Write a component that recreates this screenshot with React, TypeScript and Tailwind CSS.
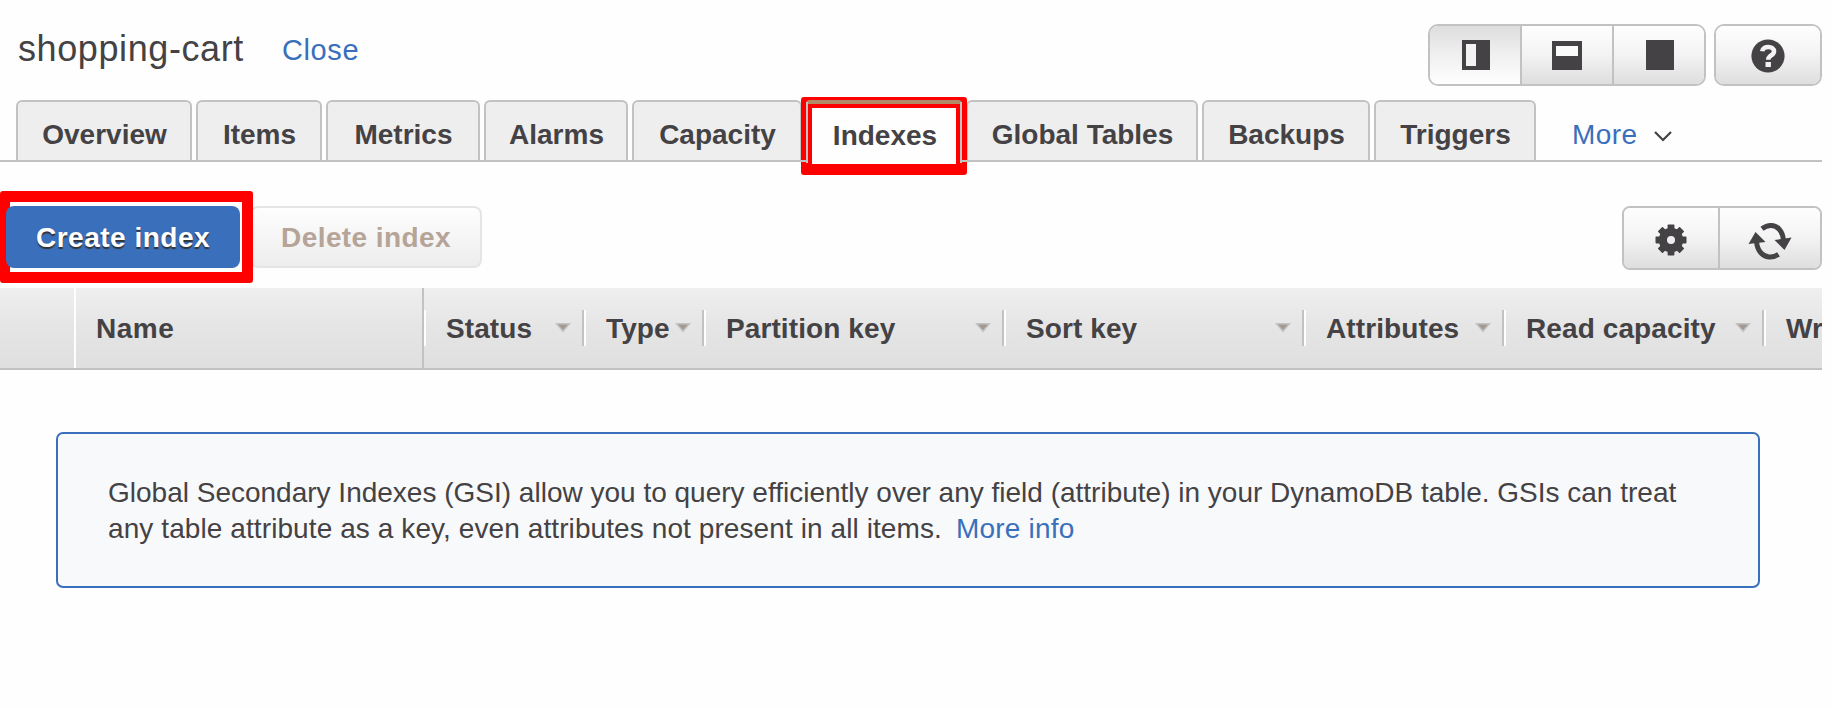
import type { ReactNode } from "react";

const TABS = [
  { label: "Overview", width: "w-[176px]" },
  { label: "Items", width: "w-[126px]" },
  { label: "Metrics", width: "w-[154px]" },
  { label: "Alarms", width: "w-[144px]" },
  { label: "Capacity", width: "w-[170px]" },
  { label: "Indexes", width: "w-[156px]" },
  { label: "Global Tables", width: "w-[232px]" },
  { label: "Backups", width: "w-[168px]" },
  { label: "Triggers", width: "w-[162px]" },
];

const COLUMNS = [
  { label: "Status", width: "w-[160px]" },
  { label: "Type", width: "w-[120px]" },
  { label: "Partition key", width: "w-[300px]" },
  { label: "Sort key", width: "w-[300px]" },
  { label: "Attributes", width: "w-[200px]" },
  { label: "Read capacity", width: "w-[260px]" },
];

function Tab({ label, width }: { label: string; width: string }) {
  if (label === "Indexes") {
    return (
      <div className={`${width} relative flex h-[62px] shrink-0 items-center justify-center bg-[#fefefe]`}>
        <div className="absolute -left-[5px] -top-[3px] h-[78px] w-[166px] rounded-[3px] border-[11px] border-[#ff0000]" />
        <div className="absolute inset-x-0 top-0 h-[4px] rounded-t-[4px] bg-[#b38a66]" />
        <div className="absolute left-0 top-[2px] h-[61px] w-[2px] bg-[#c1c3c3]" />
        <div className="absolute right-0 top-[2px] h-[61px] w-[2px] bg-[#c1c3c3]" />
        <div className="absolute -left-[5px] bottom-0 h-[2px] w-[6px] bg-[#c1c3c3]" />
        <div className="absolute -right-[5px] bottom-0 h-[2px] w-[6px] bg-[#c1c3c3]" />
        <span className="relative pl-[2px] pt-[10px]">{label}</span>
      </div>
    );
  }
  return (
    <div
      className={`${width} flex h-[60px] shrink-0 items-center justify-center rounded-t-[6px] border-2 border-b-0 border-[#c1c3c3] bg-[#eeeeee] pl-px pt-[7px]`}
    >
      {label}
    </div>
  );
}

function Button({ children, className }: { children: ReactNode; className: string }) {
  return (
    <button
      className={`${className} flex h-full shrink-0 items-center justify-center bg-linear-to-b from-[#fefefe] via-[#f3f3f3] to-[#dedede]`}
    >
      {children}
    </button>
  );
}

function GearIcon() {
  return (
    <svg width="32" height="34" viewBox="-16 -17 32 34" fill="#444244">
      {[0, 45, 90, 135].map((a) => (
        <rect key={a} x="-3.4" y="-15.5" width="6.8" height="31" rx="0.8" transform={`rotate(${a})`} />
      ))}
      <circle r="12.2" />
      <circle r="4" fill="#eeeeee" />
    </svg>
  );
}

function RefreshIcon() {
  return (
    <svg width="44" height="40" viewBox="-22 -20 44 40" fill="none" stroke="#444244" strokeWidth="5">
      <path d="M-8 -12.3 C-2 -17 5 -16.5 9 -12 C11.8 -9 13 -6 13.4 -1" />
      <path d="M4.5 -1 L21.5 -3.5 L14.5 9 Z" fill="#444244" stroke="none" />
      <path d="M8.5 13.3 C2 17.5 -5 16.5 -9 12 C-11.8 9 -13 6 -13.4 1" />
      <path d="M-4.5 1 L-21.5 3 L-14.5 -9 Z" fill="#444244" stroke="none" />
    </svg>
  );
}

export default function App() {
  return (
    <div className="flex h-[708px] w-[1832px] flex-col overflow-hidden bg-[#fefefe] pr-[10px] font-['Liberation_Sans',Arial,sans-serif] text-[28px] leading-[36px] text-[#444244]">
      <header className="flex h-[100px] shrink-0 items-start pl-[18px]">
        <h1 className="mt-[27px] w-[264px] whitespace-nowrap text-[36px] leading-[44px] tracking-[0.6px]">shopping-cart</h1>
        <a className="mt-[32px] text-[29px] leading-[36px] tracking-[0.6px] text-[#3a6fbb]">Close</a>
        <div className="ml-auto mt-[24px] flex h-[62px] gap-[8px]">
          <div className="flex w-[278px] overflow-hidden rounded-[10px] border-2 border-[#c1c3c3]">
            <button className="flex h-full w-[90px] items-center justify-center bg-linear-to-b from-[#dedede] via-[#f0f0f0] to-[#fefefe] pl-[2px]">
              <svg width="28" height="30">
                <rect width="28" height="30" fill="#444244" />
                <rect x="4" y="4" width="10" height="22" fill="#f3f3f3" />
              </svg>
            </button>
            <Button className="w-[94px] border-x-2 border-[#c1c3c3]">
              <svg width="30" height="30">
                <rect y="1" width="30" height="29" fill="#444244" />
                <rect x="4" y="6" width="22" height="10" fill="#fafafa" />
              </svg>
            </Button>
            <Button className="w-[90px]">
              <svg className="ml-px" width="28" height="30">
                <rect width="28" height="30" fill="#444244" />
              </svg>
            </Button>
          </div>
          <div className="w-[108px] overflow-hidden rounded-[10px] border-2 border-[#c1c3c3]">
            <Button className="w-full pt-[2px]">
              <svg width="34" height="34" viewBox="-17 -17 34 34" fill="none">
                <circle r="16.6" fill="#444244" />
                <path d="M-5.8 -4.8 C-5 -10.5 6 -10.5 6 -4.5 C6 -0.5 0.2 -0.5 0.2 3.7" stroke="#f3f3f3" strokeWidth="4.6" />
                <rect x="-2.5" y="6" width="5.4" height="5" fill="#f3f3f3" />
              </svg>
            </Button>
          </div>
        </div>
      </header>

      <nav className="flex h-[62px] shrink-0 gap-[4px] border-b-2 border-[#c1c3c3] pl-[16px] font-bold">
        {TABS.map((tab) => (
          <Tab key={tab.label} {...tab} />
        ))}
        <a className="ml-[32px] flex h-[60px] items-center gap-[17px] pt-[9px] font-normal tracking-[0.4px] text-[#3a6fbb]">
          More
          <svg className="mt-[2px]" width="18" height="12" viewBox="0 0 18 12" fill="none" stroke="#444244" strokeWidth="2.2">
            <path d="M1 2 L9 10 L17 2" />
          </svg>
        </a>
      </nav>

      <div className="flex h-[126px] shrink-0 items-start font-bold">
        <div className="relative mt-[29px] flex h-[92px] w-[253px] shrink-0 items-start rounded-[3px] border-[11px] border-l-[10px] border-[#ff0000]">
          <button className="-ml-[4px] mt-[4px] flex h-[62px] w-[234px] shrink-0 items-center justify-center whitespace-nowrap rounded-[8px] bg-[#3a6fbb] pt-[2px] tracking-[0.5px] text-white [text-shadow:0_2px_1px_#333333]">
            Create index
          </button>
        </div>
        <button className="-ml-[3px] mt-[44px] flex h-[62px] w-[232px] items-center justify-center rounded-[8px] border-2 border-[#e4e5e5] bg-linear-to-b from-[#fefefe] to-[#ededed] pt-[2px] tracking-[0.4px] text-[#b5a497]">
          Delete index
        </button>
        <div className="ml-auto mt-[44px] flex h-[64px] w-[200px] overflow-hidden rounded-[8px] border-2 border-[#c1c3c3]">
          <Button className="w-[94px] pt-[4px]">
            <GearIcon />
          </Button>
          <Button className="w-[102px] border-l-2 border-[#c1c3c3] pt-[6px]">
            <RefreshIcon />
          </Button>
        </div>
      </div>

      <div className="flex h-[82px] shrink-0 overflow-hidden whitespace-nowrap border-b-2 border-[#c1c3c3] bg-linear-to-b from-[#efefef] via-[#e5e5e5] to-[#dfdfdf] font-bold">
        <div className="w-[76px] shrink-0 border-r-2 border-[#fefefe]" />
        <div className="flex w-[348px] shrink-0 items-center border-r-2 border-[#c1c3c3] pl-[20px] pt-[2px] tracking-[0.5px]">Name</div>
        {COLUMNS.map(({ label, width }) => (
          <div key={label} className={`${width} mt-[22px] flex h-[36px] shrink-0 items-center border-l-2 border-r-2 border-l-[#fefefe] border-r-[#c1c3c3] pl-[20px] pr-[11px]`}>
            <span className="pt-[2px] tracking-[0.1px]">{label}</span>
            <svg className="ml-auto shrink-0" width="16" height="10" viewBox="0 0 16 10">
              <path d="M0 0 H16 L8 9.5 Z" fill="#c1c3c3" />
              <path d="M3 1.5 H13 L8 7 Z" fill="#a39992" />
            </svg>
          </div>
        ))}
        <div className="mt-[22px] flex h-[36px] w-[60px] shrink-0 items-center overflow-hidden border-l-2 border-[#fefefe] pl-[20px] pt-[2px]">Wr</div>
      </div>

      <section className="ml-[56px] mt-[62px] h-[156px] w-[1704px] shrink-0 whitespace-nowrap rounded-[7px] border-2 border-[#3a6fbb] bg-[#f8f9fa] pl-[50px] pt-[41px]">
        <p>Global Secondary Indexes (GSI) allow you to query efficiently over any field (attribute) in your DynamoDB table. GSIs can treat</p>
        <p className="tracking-[0.09px]">
          any table attribute as a key, even attributes not present in all items.
          <a className="ml-[14px] tracking-[0.2px] text-[#3a6fbb]">More info</a>
        </p>
      </section>
    </div>
  );
}
